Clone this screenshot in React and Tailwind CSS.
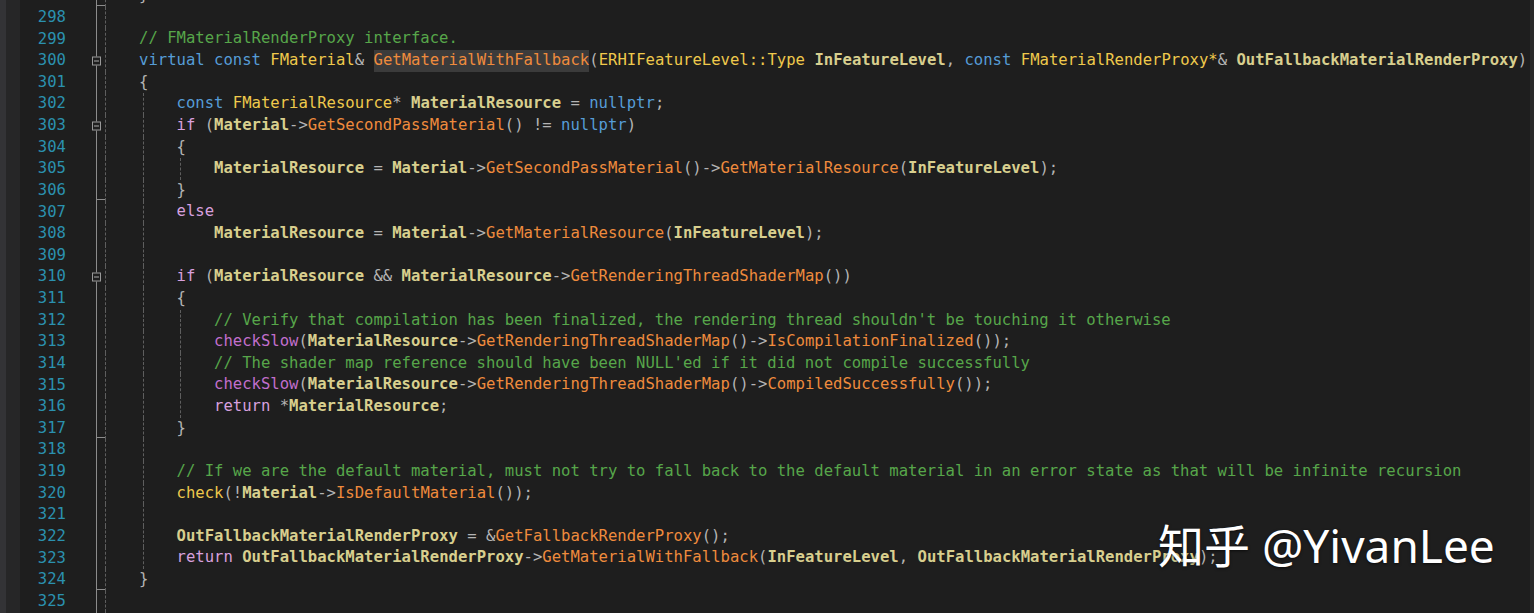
import React from 'react';

const TOKEN = {
  k: 'text-[#569cd6]',
  c: 'text-[#d8a0df]',
  t: 'text-[#efc94c]',
  v: 'text-[#d8cf8e] font-bold',
  m: 'text-[#ef8b3d]',
  x: 'text-[#c26fcd]',
  g: 'text-[#57a64a]',
  p: 'text-[#b4b4b4]',
  h: 'inline-block bg-[#3b3b3b] text-[#ef8b3d]',
};

const LINES = [
  { n: 297, indent: 4, guides: [0], tick: true, toks: [['p', '}']] },
  { n: 298, indent: 0, guides: [0], toks: [] },
  { n: 299, indent: 4, guides: [0], toks: [['g', '// FMaterialRenderProxy interface.']] },
  {
    n: 300, indent: 4, guides: [0], fold: true,
    toks: [['k', 'virtual'], ['p', ' '], ['k', 'const'], ['p', ' '], ['t', 'FMaterial'], ['p', '& '], ['h', 'GetMaterialWithFallback'], ['p', '('], ['t', 'ERHIFeatureLevel::Type'], ['p', ' '], ['v', 'InFeatureLevel'], ['p', ', '], ['k', 'const'], ['p', ' '], ['t', 'FMaterialRenderProxy*'], ['p', '& '], ['v', 'OutFallbackMaterialRenderProxy'], ['p', ')']],
  },
  { n: 301, indent: 4, guides: [0], toks: [['p', '{']] },
  { n: 302, indent: 8, guides: [0, 4], toks: [['k', 'const'], ['p', ' '], ['t', 'FMaterialResource'], ['p', '* '], ['v', 'MaterialResource'], ['p', ' = '], ['k', 'nullptr'], ['p', ';']] },
  { n: 303, indent: 8, guides: [0, 4], fold: true, toks: [['c', 'if'], ['p', ' ('], ['v', 'Material'], ['p', '->'], ['m', 'GetSecondPassMaterial'], ['p', '() != '], ['k', 'nullptr'], ['p', ')']] },
  { n: 304, indent: 8, guides: [0, 4], toks: [['p', '{']] },
  { n: 305, indent: 12, guides: [0, 4, 8], toks: [['v', 'MaterialResource'], ['p', ' = '], ['v', 'Material'], ['p', '->'], ['m', 'GetSecondPassMaterial'], ['p', '()->'], ['m', 'GetMaterialResource'], ['p', '('], ['v', 'InFeatureLevel'], ['p', ');']] },
  { n: 306, indent: 8, guides: [0, 4], tick: true, toks: [['p', '}']] },
  { n: 307, indent: 8, guides: [0, 4], toks: [['c', 'else']] },
  { n: 308, indent: 12, guides: [0, 4], toks: [['v', 'MaterialResource'], ['p', ' = '], ['v', 'Material'], ['p', '->'], ['m', 'GetMaterialResource'], ['p', '('], ['v', 'InFeatureLevel'], ['p', ');']] },
  { n: 309, indent: 0, guides: [0, 4], toks: [] },
  { n: 310, indent: 8, guides: [0, 4], fold: true, toks: [['c', 'if'], ['p', ' ('], ['v', 'MaterialResource'], ['p', ' && '], ['v', 'MaterialResource'], ['p', '->'], ['m', 'GetRenderingThreadShaderMap'], ['p', '())']] },
  { n: 311, indent: 8, guides: [0, 4], toks: [['p', '{']] },
  { n: 312, indent: 12, guides: [0, 4, 8], toks: [['g', "// Verify that compilation has been finalized, the rendering thread shouldn't be touching it otherwise"]] },
  { n: 313, indent: 12, guides: [0, 4, 8], toks: [['x', 'checkSlow'], ['p', '('], ['v', 'MaterialResource'], ['p', '->'], ['m', 'GetRenderingThreadShaderMap'], ['p', '()->'], ['m', 'IsCompilationFinalized'], ['p', '());']] },
  { n: 314, indent: 12, guides: [0, 4, 8], toks: [['g', "// The shader map reference should have been NULL'ed if it did not compile successfully"]] },
  { n: 315, indent: 12, guides: [0, 4, 8], toks: [['x', 'checkSlow'], ['p', '('], ['v', 'MaterialResource'], ['p', '->'], ['m', 'GetRenderingThreadShaderMap'], ['p', '()->'], ['m', 'CompiledSuccessfully'], ['p', '());']] },
  { n: 316, indent: 12, guides: [0, 4, 8], toks: [['c', 'return'], ['p', ' *'], ['v', 'MaterialResource'], ['p', ';']] },
  { n: 317, indent: 8, guides: [0, 4], tick: true, toks: [['p', '}']] },
  { n: 318, indent: 0, guides: [0, 4], toks: [] },
  { n: 319, indent: 8, guides: [0, 4], toks: [['g', '// If we are the default material, must not try to fall back to the default material in an error state as that will be infinite recursion']] },
  { n: 320, indent: 8, guides: [0, 4], toks: [['t', 'check'], ['p', '(!'], ['v', 'Material'], ['p', '->'], ['m', 'IsDefaultMaterial'], ['p', '());']] },
  { n: 321, indent: 0, guides: [0, 4], toks: [] },
  { n: 322, indent: 8, guides: [0, 4], toks: [['v', 'OutFallbackMaterialRenderProxy'], ['p', ' = &'], ['m', 'GetFallbackRenderProxy'], ['p', '();']] },
  { n: 323, indent: 8, guides: [0, 4], toks: [['c', 'return'], ['p', ' '], ['v', 'OutFallbackMaterialRenderProxy'], ['p', '->'], ['m', 'GetMaterialWithFallback'], ['p', '('], ['v', 'InFeatureLevel'], ['p', ', '], ['v', 'OutFallbackMaterialRenderProxy'], ['p', ');']] },
  { n: 324, indent: 4, guides: [0], tick: true, toks: [['p', '}']] },
  { n: 325, indent: 0, guides: [0], toks: [] },
  { n: 326, indent: 0, guides: [0], toks: [] },
];

const CodeLine = ({ line }) => {
  const count = Math.max(line.indent / 4, Math.max(...line.guides) / 4 + 1);
  const spans = Array.from({ length: count }, (_, i) => i * 4);

  return (
    <div className="flex h-[21.63px] items-center whitespace-pre">
      {/* line number */}
      <div className="w-[46px] shrink-0 text-right text-[#2b91af]">{line.n}</div>

      {/* outlining margin */}
      <div className="flex w-[35.5px] shrink-0 self-stretch">
        <div className="w-[30px] shrink-0" />
        <div className="relative flex-1 border-l border-[#8c8c8c]">
          {line.fold && (
            <div className="absolute left-[-5px] top-1/2 flex h-[9px] w-[9px] -translate-y-1/2 items-center justify-center border border-[#999999] bg-[#1e1e1e]">
              <div className="h-px w-[5px] bg-[#aaaaaa]" />
            </div>
          )}
          {line.tick && <div className="absolute bottom-[1px] left-0 h-px w-[8px] bg-[#8c8c8c]" />}
        </div>
      </div>

      {/* indentation with guides */}
      {spans.map((col) => (
        <span key={col} className="flex w-[4ch] shrink-0 self-stretch">
          {line.guides.includes(col) && (
            <span className="ml-[3.5px] border-l border-dashed border-[#5e5e5e]" />
          )}
        </span>
      ))}

      <span className="leading-[21.63px]">
        {line.toks.map(([kind, text], i) => (
          <span key={i} className={TOKEN[kind]}>
            {text}
          </span>
        ))}
      </span>
    </div>
  );
};

export default function App() {
  return (
    <div className="relative flex h-[613px] w-[1534px] overflow-hidden bg-[#1e1e1e] font-['DejaVu_Sans_Mono',monospace] text-[15.58px]">
      <div className="w-[6px] shrink-0 bg-[#333336]" />
      <div className="w-[14px] shrink-0 bg-[#262627]" />

      <div className="min-w-0 flex-1 overflow-hidden">
        <div className="mt-[-14.8px]">
          {LINES.map((line) => (
            <CodeLine key={line.n} line={line} />
          ))}
        </div>
      </div>

      <div className="w-[4px] shrink-0 bg-[#2a2a2a]" />

      {/* watermark */}
      <div className="absolute left-[1158px] top-[522px] whitespace-nowrap font-['Noto_Sans','Noto_Sans_CJK_SC',sans-serif] text-[46px] leading-none text-white [text-shadow:0_1px_3px_rgba(0,0,0,0.6)]">
        知乎 @YivanLee
      </div>
    </div>
  );
}
